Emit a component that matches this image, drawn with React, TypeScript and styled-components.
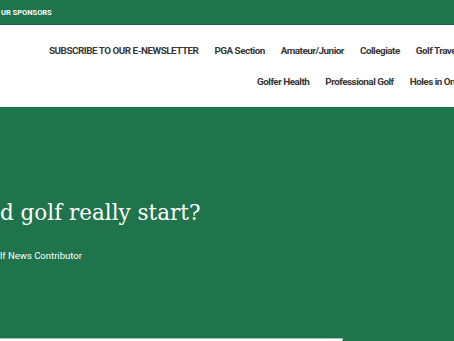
import styled, { createGlobalStyle } from 'styled-components';

const GlobalStyle = createGlobalStyle`
  html, body {
    margin: 0;
    padding: 0;
    background: #1f744c;
  }
  body {
    font-family: Roboto, "Liberation Sans", Arial, sans-serif;
    overflow: hidden;
  }
`;

const green = '#1f744c';

const Viewport = styled.div`
  width: 454px;
  height: 341px;
  overflow: hidden;
  display: flex;
  flex-direction: column;
  background: ${green};
`;

const TopBar = styled.div`
  height: 24px;
  flex-shrink: 0;
  background: ${green};
  border-bottom: 1px solid #17613f;
  display: flex;
  align-items: center;
  padding-left: 1px;
`;

const TopLink = styled.a`
  color: #fff;
  font-size: 7.5px;
  font-weight: 700;
  text-transform: uppercase;
  text-decoration: none;
`;

const Header = styled.header`
  background: #fff;
  height: 82px;
  flex-shrink: 0;
  display: flex;
  flex-direction: column;
  padding-top: 17px;
  box-sizing: border-box;
  gap: 14px;
`;

const NavRow = styled.nav<{ $indent: number }>`
  display: flex;
  gap: 16px;
  padding-left: ${(p) => p.$indent}px;
  white-space: nowrap;
`;

const NavItem = styled.a`
  color: #383838;
  font-size: 9.9px;
  letter-spacing: -0.5px;
  font-weight: 700;
  text-decoration: none;
  line-height: 17px;
`;

const Hero = styled.section`
  flex: 1;
  background: ${green};
  display: flex;
  flex-direction: column;
  padding-top: 90px;
`;

const Title = styled.h1`
  margin: 0;
  color: #fff;
  font-family: "DejaVu Serif", "Liberation Serif", serif;
  font-weight: 400;
  font-size: 21.5px;
  line-height: 32px;
  white-space: nowrap;
`;

const Byline = styled.p`
  margin: 20px 0 0 0;
  color: #fff;
  font-size: 9.5px;
  line-height: 14px;
`;

const Card = styled.div`
  margin-top: auto;
  width: 342px;
  height: 2px;
  background: #fff;
  border-top: 1px solid #9dbfae;
  border-right: 1px solid #9dbfae;
`;

export default function App() {
  return (
    <>
      <GlobalStyle />
      <Viewport>
        <TopBar>
          <TopLink href="#">ur sponsors</TopLink>
        </TopBar>
        <Header>
          <NavRow $indent={49}>
            <NavItem href="#">SUBSCRIBE TO OUR E-NEWSLETTER</NavItem>
            <NavItem href="#">PGA Section</NavItem>
            <NavItem href="#">Amateur/Junior</NavItem>
            <NavItem href="#">Collegiate</NavItem>
            <NavItem href="#">Golf Travel</NavItem>
          </NavRow>
          <NavRow $indent={257}>
            <NavItem href="#">Golfer Health</NavItem>
            <NavItem href="#">Professional Golf</NavItem>
            <NavItem href="#">Holes in One</NavItem>
          </NavRow>
        </Header>
        <Hero>
          <Title>d golf really start?</Title>
          <Byline>lf News Contributor</Byline>
          <Card />
        </Hero>
      </Viewport>
    </>
  );
}
